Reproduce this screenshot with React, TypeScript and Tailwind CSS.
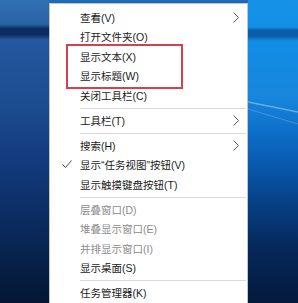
import { Fragment, type ReactNode } from 'react';

type Item = {
  label: ReactNode;
  key: string;
  arrow?: boolean;
  checked?: boolean;
  disabled?: boolean;
};

const q = (ch: string) => <span className="font-['Liberation_Sans']">{ch}</span>;

const groups: Item[][] = [
  [
    { key: 'view', label: '查看(V)', arrow: true },
    { key: 'open', label: '打开文件夹(O)' },
    { key: 'text', label: '显示文本(X)' },
    { key: 'title', label: '显示标题(W)' },
    { key: 'close', label: '关闭工具栏(C)' },
  ],
  [{ key: 'bars', label: '工具栏(T)', arrow: true }],
  [
    { key: 'search', label: '搜索(H)', arrow: true },
    {
      key: 'taskview',
      label: (
        <>
          显示{q('“')}任务视图{q('”')}按钮(V)
        </>
      ),
      checked: true,
    },
    { key: 'keyboard', label: '显示触摸键盘按钮(T)' },
  ],
  [
    { key: 'cascade', label: '层叠窗口(D)', disabled: true },
    { key: 'stack', label: '堆叠显示窗口(E)', disabled: true },
    { key: 'side', label: '并排显示窗口(I)', disabled: true },
    { key: 'desktop', label: '显示桌面(S)' },
  ],
  [{ key: 'taskmgr', label: '任务管理器(K)' }],
];

function MenuRow({ item }: { item: Item }) {
  return (
    <div className="flex h-[19.5px] items-center">
      <div className="flex h-full w-[30px] shrink-0 items-center">
        {item.checked && (
          <svg width="30" height="20" viewBox="0 0 30 20" fill="none">
            <path d="M12.5 9.5 L15.5 12.5 L21.5 5.5" stroke="#4a4a4a" strokeWidth="1" />
          </svg>
        )}
      </div>
      <span
        className={`flex-1 whitespace-nowrap leading-none ${
          item.disabled ? 'text-[#8c8c8c]' : 'text-[#1a1a1a]'
        }`}
      >
        {item.label}
      </span>
      <div className="mr-[7px] flex h-full w-[14px] shrink-0 items-center">
        {item.arrow && (
          <svg width="14" height="20" viewBox="0 0 14 20" fill="none">
            <path d="M7.5 4.5 L12.5 9.5 L7.5 14.5" stroke="#5a5a5a" strokeWidth="1" />
          </svg>
        )}
      </div>
    </div>
  );
}

export default function App() {
  return (
    <div className="flex h-[303px] w-[298px] overflow-hidden bg-[#1b6cbc] font-['Liberation_Sans','Noto_Sans_CJK_SC',sans-serif] text-[10.5px]">
      {/* desktop, left of the menu */}
      <div className="h-full w-[49px] shrink-0 bg-[linear-gradient(180deg,#3170b4_0%,#2a62a8_8%,#0b2c5c_9.5%,#0c2e60_11.5%,#2558a0_13%,#1c4c90_35%,#12397a_55%,#0a2a5c_75%,#041634_100%)]" />

      {/* context menu */}
      <div className="relative mt-[3px] w-[199px] shrink-0 self-start border border-[#c4c4c4] bg-white pt-[4px] pb-[6px] shadow-[2px_2px_3px_rgba(0,0,0,0.35)]">
        {groups.map((group, gi) => (
          <Fragment key={gi}>
            {gi > 0 && (
              <div className="flex h-[5.5px] items-center pl-[30px] pr-px">
                <div className="h-px flex-1 bg-[#d9d9d9]" />
              </div>
            )}
            {group.map((item) => (
              <MenuRow key={item.key} item={item} />
            ))}
          </Fragment>
        ))}

        {/* red annotation box */}
        <div className="absolute left-[16px] top-[40px] h-[45px] w-[117px] border-2 border-[#d6404d]" />
      </div>

      {/* desktop, right of the menu */}
      <div className="relative h-full flex-1 bg-[linear-gradient(180deg,#1592e8_0%,#1290e6_9%,#0a5ca6_10%,#0a5ea8_12%,#118de6_13.5%,#1886dc_32%,#0c6cc6_45%,#0858ac_55%,#073e82_68%,#05285a_82%,#031a3c_100%)]">
        <svg className="absolute left-0 top-0" width="50" height="303" viewBox="0 0 50 303" fill="none">
          <path d="M0 102 L50 112" stroke="rgba(255,255,255,0.35)" strokeWidth="1.5" />
          <path d="M0 109 L50 124" stroke="rgba(255,255,255,0.2)" strokeWidth="1" />
        </svg>
      </div>
    </div>
  );
}
